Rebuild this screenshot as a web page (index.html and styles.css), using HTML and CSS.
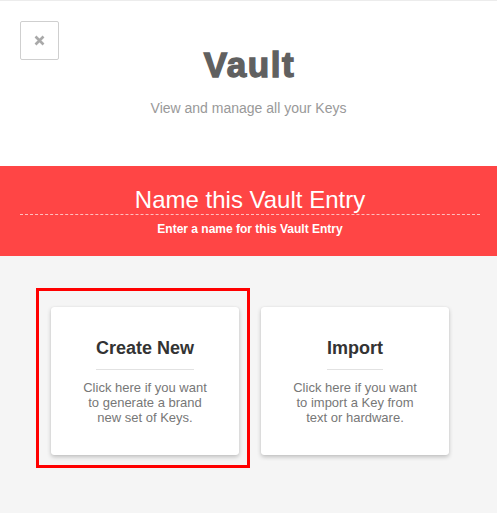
FILE: index.html
```html
<!DOCTYPE html>
<html lang="en">
<head>
<meta charset="utf-8">
<title>Vault</title>
<link rel="stylesheet" href="styles.css">
</head>
<body>
<div class="page">
  <header class="header">
    <button class="close" aria-label="Close">
      <svg width="11" height="11" viewBox="0 0 11 11"><path d="M1.5 1.5 L9.5 9.5 M9.5 1.5 L1.5 9.5" stroke="#a9a9a9" stroke-width="2.6" stroke-linecap="butt"/></svg>
    </button>
    <h1 class="title">Vault</h1>
    <p class="subtitle">View and manage all your Keys</p>
  </header>
  <section class="banner">
    <div class="entry-name">Name this Vault Entry</div>
    <div class="entry-hint">Enter a name for this Vault Entry</div>
  </section>
  <section class="choices">
    <div class="card selected">
      <h2 class="card-title">Create New</h2>
      <p class="card-text">Click here if you want to generate a brand new set of Keys.</p>
      <span class="highlight"></span>
    </div>
    <div class="card">
      <h2 class="card-title">Import</h2>
      <p class="card-text">Click here if you want to import a Key from text or hardware.</p>
    </div>
  </section>
</div>
</body>
</html>
```
FILE: styles.css
```css
* { box-sizing: border-box; }
html, body { margin: 0; padding: 0; }
body {
  font-family: "Liberation Sans", Arial, sans-serif;
  background: #f5f5f5;
  width: 497px;
  height: 513px;
  overflow: hidden;
}
.page { display: flex; flex-direction: column; height: 513px; }
.header {
  position: relative;
  background: #fff;
  border-top: 1px solid #ececec;
  height: 166px;
  display: flex;
  flex-direction: column;
  align-items: center;
  padding-top: 44px;
}
.close {
  position: absolute;
  left: 20px;
  top: 20px;
  width: 39px;
  height: 39px;
  border: 1px solid #cfcfcf;
  border-radius: 2px;
  background: #fff;
  padding: 0;
  display: flex;
  align-items: center;
  justify-content: center;
}
.title {
  margin: 0;
  font-size: 35px;
  line-height: 40px;
  font-weight: bold;
  letter-spacing: 1.6px;
  color: #606060;
  -webkit-text-stroke: 1.4px #606060;
  padding-left: 2px;
}
.subtitle {
  margin: 15px 0 0;
  font-size: 14px;
  line-height: 16px;
  color: #999;
}
.banner {
  background: #ff4545;
  height: 90px;
  padding: 20px 17px 0 20px;
  display: flex;
  flex-direction: column;
  align-items: stretch;
  color: #fff;
  text-align: center;
}
.entry-name {
  font-size: 24px;
  line-height: 28px;
  border-bottom: 1px dashed rgba(255, 255, 255, 0.65);
}
.entry-hint {
  margin-top: 7px;
  font-size: 12px;
  line-height: 14px;
  font-weight: bold;
}
.choices {
  flex: 1;
  display: flex;
  gap: 22px;
  padding: 51px 0 0 51px;
  align-items: flex-start;
}
.card {
  position: relative;
  width: 188px;
  height: 148px;
  background: #fff;
  border-radius: 3px;
  box-shadow: 0 2px 4px rgba(0, 0, 0, 0.22), 0 0 1px rgba(0, 0, 0, 0.12);
  padding: 30px 30px;
  display: flex;
  flex-direction: column;
  align-items: center;
  text-align: center;
}
.card-title {
  margin: 0;
  font-size: 18px;
  line-height: 22px;
  font-weight: bold;
  color: #333;
  padding-bottom: 10px;
  border-bottom: 1px solid #e2e2e2;
}
.card-text {
  margin: 10px 0 0;
  font-size: 13px;
  line-height: 15px;
  color: #777;
}
.highlight {
  position: absolute;
  left: -15px;
  top: -19px;
  right: -11px;
  bottom: -13px;
  border: 3px solid #ff0000;
  pointer-events: none;
}
```
